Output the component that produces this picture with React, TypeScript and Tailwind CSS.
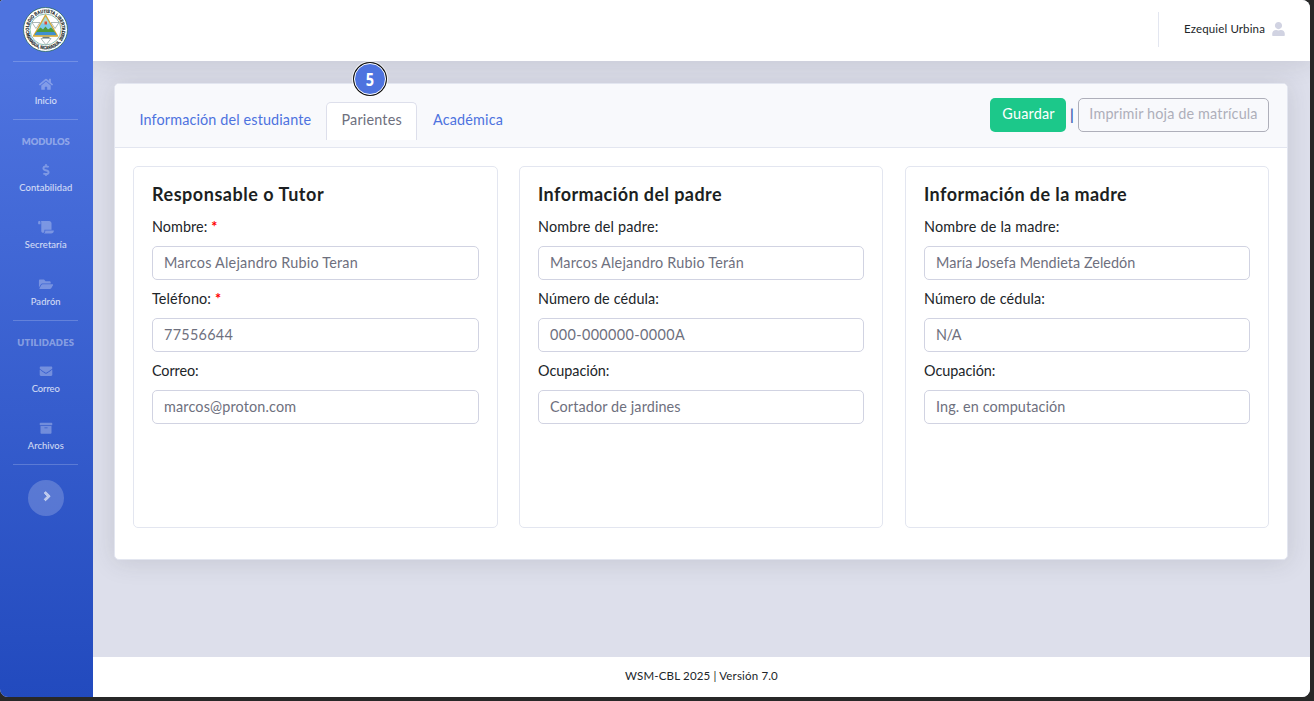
import type { ReactNode } from "react";
import {
  FaAngleRight,
  FaArchive,
  FaDollarSign,
  FaEnvelope,
  FaFolderOpen,
  FaHome,
  FaScroll,
  FaUser,
} from "react-icons/fa";

function SchoolSeal() {
  return (
    <svg viewBox="0 0 90 90" className="h-[45px] w-[45px]" aria-hidden="true">
      <defs>
        <path id="seal-top" d="M 14 56 A 33 33 0 1 1 76 56" />
        <path id="seal-bottom" d="M 6 52 A 39.6 39.6 0 0 0 84 52" />
      </defs>
      <circle cx="45" cy="45" r="44" fill="#ffffff" stroke="#2d6a5e" strokeWidth="1.6" />
      <circle cx="45" cy="45" r="31" fill="#ffffff" stroke="#3f8f7c" strokeWidth="1.2" />
      <text fontFamily="Liberation Sans, sans-serif" fontSize="9.5" fontWeight="700" fill="#1d2b2b" stroke="#1d2b2b" strokeWidth="0.4">
        <textPath href="#seal-top" startOffset="50%" textAnchor="middle" textLength="120" lengthAdjust="spacingAndGlyphs">
          COLEGIO BAUTISTA LIBERTAD
        </textPath>
      </text>
      <text fontFamily="Liberation Sans, sans-serif" fontSize="9.5" fontWeight="700" fill="#1d2b2b" stroke="#1d2b2b" strokeWidth="0.4">
        <textPath href="#seal-bottom" startOffset="50%" textAnchor="middle" textLength="106" lengthAdjust="spacingAndGlyphs">
          MANAGUA, NICARAGUA, 2000
        </textPath>
      </text>
      <g fill="#ffffff" stroke="#8a9a98" strokeWidth="1.4">
        <path d="M18 31 H34 L26 43 Z" />
        <path d="M56 31 H72 L64 43 Z" />
        <path d="M36 63 H56 L46 76 Z" />
      </g>
      <path d="M45 16 L69 58 H21 Z" fill="#7ccbe8" stroke="#d9a62e" strokeWidth="2.6" strokeLinejoin="round" />
      <path d="M45 20 L52 33 H38 Z" fill="#b9d9c8" />
      <path d="M43 29 H48 V35 H43 Z" fill="#d84a3a" />
      <path d="M29 46 L35 41 L40 45 L45 39 L50 45 L56 41 L61 46 L66 54 H24 Z" fill="#4f9a3a" />
      <path d="M23 56 L27 50 H63 L67 56 Z" fill="#3f8fd0" />
      <path d="M39 60.5 H53" stroke="#6c7a78" strokeWidth="2.5" />
    </svg>
  );
}

function Divider() {
  return <div className="ml-[13px] h-px w-[65px] shrink-0 bg-white/20" />;
}

function NavItem({ icon, label, spacing }: { icon: ReactNode; label: string; spacing: string }) {
  return (
    <a className="flex h-[57.3px] w-[91.5px] shrink-0 flex-col items-center pt-[15.6px]">
      <span className="flex h-[12.6px] items-center text-white/30 [&>svg]:h-[12.6px] [&>svg]:w-[16px]">{icon}</span>
      <span className={`mt-[4.3px] text-[9.4px] leading-[14px] text-white/80 ${spacing}`}>{label}</span>
    </a>
  );
}

function NavHeading({ children, spacing }: { children: ReactNode; spacing: string }) {
  return (
    <div
      className={`flex h-[28px] w-[91.5px] shrink-0 items-end justify-center text-[9.4px] leading-[13px] font-extrabold text-white/40 ${spacing}`}
    >
      {children}
    </div>
  );
}

type FieldData = {
  label: string;
  labelSpacing: string;
  value: string;
  valueSpacing: string;
  required?: boolean;
};

function Field({ label, labelSpacing, value, valueSpacing, required }: FieldData) {
  return (
    <label className="block h-[72px]">
      <span className="block h-[30px] text-[14.4px] leading-[21px] text-[#212529]">
        <span className={labelSpacing}>{label}</span>
        {required && <span className="ml-[4px] font-bold text-[#ff0000]">*</span>}
      </span>
      <span
        className={`flex h-[34px] items-center rounded-[5px] border border-[#d1d3e2] bg-white px-[11px] text-[14.4px] leading-[20px] text-[#6e707e] ${valueSpacing}`}
      >
        {value}
      </span>
    </label>
  );
}

type PanelProps = { title: string; spacing: string; width: string; fields: FieldData[] };

function Panel({ title, spacing, width, fields }: PanelProps) {
  return (
    <section className={`h-[362px] rounded-[5px] border border-[#e3e6f0] px-[18px] pt-[17px] ${width}`}>
      <h5 className={`h-[32px] text-[18px] leading-[20px] font-bold text-[#1c1f22] ${spacing}`}>{title}</h5>
      {fields.map((field) => (
        <Field key={field.label} {...field} />
      ))}
    </section>
  );
}

const guardian: FieldData[] = [
  {
    label: "Nombre:",
    labelSpacing: "tracking-[0.05px]",
    value: "Marcos Alejandro Rubio Teran",
    valueSpacing: "tracking-[0.21px]",
    required: true,
  },
  {
    label: "Teléfono:",
    labelSpacing: "tracking-[0.11px]",
    value: "77556644",
    valueSpacing: "tracking-[0.28px]",
    required: true,
  },
  {
    label: "Correo:",
    labelSpacing: "tracking-[-0.1px]",
    value: "marcos@proton.com",
    valueSpacing: "tracking-[0.16px]",
  },
];

const father: FieldData[] = [
  {
    label: "Nombre del padre:",
    labelSpacing: "tracking-[0.2px]",
    value: "Marcos Alejandro Rubio Terán",
    valueSpacing: "tracking-[0.21px]",
  },
  {
    label: "Número de cédula:",
    labelSpacing: "tracking-[0.12px]",
    value: "000-000000-0000A",
    valueSpacing: "tracking-[0.38px]",
  },
  {
    label: "Ocupación:",
    labelSpacing: "tracking-[-0.03px]",
    value: "Cortador de jardines",
    valueSpacing: "tracking-[0.12px]",
  },
];

const mother: FieldData[] = [
  {
    label: "Nombre de la madre:",
    labelSpacing: "tracking-[0.2px]",
    value: "María Josefa Mendieta Zeledón",
    valueSpacing: "tracking-[0.05px]",
  },
  {
    label: "Número de cédula:",
    labelSpacing: "tracking-[0.12px]",
    value: "N/A",
    valueSpacing: "tracking-[-0.47px]",
  },
  {
    label: "Ocupación:",
    labelSpacing: "tracking-[-0.03px]",
    value: "Ing. en computación",
    valueSpacing: "tracking-[0.1px]",
  },
];

export default function App() {
  return (
    <div className="h-[701px] w-[1314px] overflow-hidden bg-[#282828] font-['Lato','Noto_Sans',sans-serif]">
      <div className="flex h-[697px] w-[1310px] overflow-hidden rounded-[8px] rounded-tl-[3px] bg-[#dddfeb]">
        <nav className="flex w-[93px] shrink-0 flex-col bg-linear-to-b from-[#4e73df] from-10% to-[#224abe]">
          <div className="flex h-[61px] w-[91px] shrink-0 items-start justify-center pt-[7px]">
            <SchoolSeal />
          </div>
          <Divider />
          <NavItem icon={<FaHome />} label="Inicio" spacing="tracking-[0px]" />
          <Divider />
          <NavHeading spacing="tracking-[-0.05px]">MODULOS</NavHeading>
          <NavItem icon={<FaDollarSign />} label="Contabilidad" spacing="tracking-[0.1px]" />
          <NavItem icon={<FaScroll />} label="Secretaría" spacing="tracking-[0.1px]" />
          <NavItem icon={<FaFolderOpen />} label="Padrón" spacing="tracking-[0.14px]" />
          <Divider />
          <NavHeading spacing="tracking-[0.22px]">UTILIDADES</NavHeading>
          <NavItem icon={<FaEnvelope />} label="Correo" spacing="tracking-[-0.06px]" />
          <NavItem icon={<FaArchive />} label="Archivos" spacing="tracking-[0.05px]" />
          <Divider />
          <button className="mt-[15.2px] ml-[28px] flex h-[36px] w-[36px] shrink-0 items-center justify-center rounded-full bg-white/20 pb-[3px] pl-[2px] text-[14.4px] text-white/60">
            <FaAngleRight strokeWidth="24" stroke="currentColor" />
          </button>
        </nav>

        <div className="flex min-w-0 flex-1 flex-col overflow-hidden">
          <header className="flex h-[61px] shrink-0 items-start justify-end bg-white pr-[25px] shadow-[0_2px_25px_rgba(58,59,69,0.15)]">
            <div className="mt-[12px] h-[35px] w-px bg-[#e3e6f0]" />
            <span className="mt-[20px] ml-[25px] w-[81px] text-[11.5px] leading-[18px] tracking-[0.137px] whitespace-nowrap text-[#212529]">
              Ezequiel Urbina
            </span>
            <FaUser className="mt-[22px] ml-[7px] h-[14.4px] w-[13px] text-[#d1d3e2]" />
          </header>

          <main className="flex-1 px-[21px] pt-[22px]">
            <div className="relative h-[477px] w-[1174px] rounded-[5px] border border-[#e3e6f0] bg-white shadow-[0_2px_25px_rgba(58,59,69,0.15)]">
              <div className="flex h-[64px] items-start rounded-t-[4px] border-b border-[#e3e6f0] bg-[#f8f9fc] pr-[18px] pl-[9px] text-[14.4px]">
                <div className="mt-[18px] flex h-[38px] leading-[35px] text-[#4e73df]">
                  <a className="w-[202px] pl-[15.5px] tracking-[0.13px]">Información del estudiante</a>
                  <a className="w-[91px] rounded-t-[5px] border border-b-0 border-[#dddfeb] bg-white pl-[14.5px] leading-[33px] tracking-[0.18px] text-[#6e707e]">
                    Parientes
                  </a>
                  <a className="pl-[16px] tracking-[0.16px]">Académica</a>
                </div>
                <div className="mt-[14px] ml-auto flex h-[34px] items-center">
                  <button className="h-[34px] w-[76px] rounded-[5px] bg-[#1cc88a] pb-[2px] pl-[1px] tracking-[0.2px] text-white">
                    Guardar
                  </button>
                  <span className="w-[12px] text-center font-bold text-[#3f63b4]">|</span>
                  <button className="h-[34px] w-[191px] rounded-[5px] border border-[#aeafba] pb-[2px] tracking-[0.15px] whitespace-nowrap text-[#aeafba]">
                    Imprimir hoja de matrícula
                  </button>
                </div>
              </div>

              <div className="grid grid-cols-[386px_386px_364px] px-[18px] pt-[18px]">
                <Panel title="Responsable o Tutor" spacing="tracking-[0.53px]" width="w-[365px]" fields={guardian} />
                <Panel title="Información del padre" spacing="tracking-[0.42px]" width="w-[364px]" fields={father} />
                <Panel title="Información de la madre" spacing="tracking-[0.42px]" width="w-[364px]" fields={mother} />
              </div>

              <div className="absolute top-[-23px] left-[237px] flex h-[36px] w-[36px] items-center justify-center rounded-full bg-white/70 p-[0.7px]">
                <div className="flex h-full w-full items-center justify-center rounded-full bg-[#111111] p-[1.4px]">
                  <div className="flex h-full w-full items-center justify-center rounded-full border border-white bg-[#4e73df] font-['Open_Sans'] text-[17px] leading-none font-bold text-white">
                    <span className="inline-block scale-x-85">5</span>
                  </div>
                </div>
              </div>
            </div>
          </main>

          <footer className="flex h-[40px] shrink-0 items-center justify-center bg-white pb-[2px] text-[11.5px] tracking-[0.17px] text-[#212529]">
            WSM-CBL 2025 | Versión 7.0
          </footer>
        </div>
      </div>
    </div>
  );
}
